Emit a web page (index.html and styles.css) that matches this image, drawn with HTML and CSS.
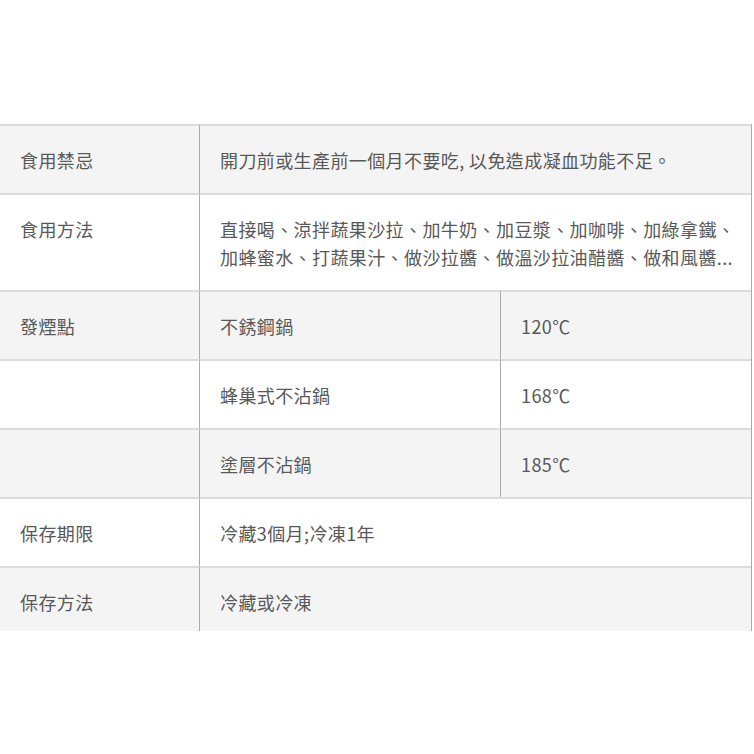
FILE: index.html
```html
<!DOCTYPE html>
<html lang="zh-Hant">
<head>
<meta charset="utf-8">
<title>商品資訊</title>
<link rel="stylesheet" href="styles.css">
</head>
<body>
<div class="spec-wrap">
  <table class="spec">
    <colgroup>
      <col class="c-label">
      <col class="c-mid">
      <col class="c-right">
    </colgroup>
    <tbody>
      <tr class="alt">
        <td class="label">食用禁忌</td>
        <td class="val" colspan="2">開刀前或生產前一個月不要吃, 以免造成凝血功能不足。</td>
      </tr>
      <tr>
        <td class="label">食用方法</td>
        <td class="val" colspan="2">直接喝、涼拌蔬果沙拉、加牛奶、加豆漿、加咖啡、加綠拿鐵、<br>加蜂蜜水、打蔬果汁、做沙拉醬、做溫沙拉油醋醬、做和風醬...</td>
      </tr>
      <tr class="alt">
        <td class="label">發煙點</td>
        <td class="val">不銹鋼鍋</td>
        <td class="val">120℃</td>
      </tr>
      <tr>
        <td class="label"></td>
        <td class="val">蜂巢式不沾鍋</td>
        <td class="val">168℃</td>
      </tr>
      <tr class="alt">
        <td class="label"></td>
        <td class="val">塗層不沾鍋</td>
        <td class="val">185℃</td>
      </tr>
      <tr>
        <td class="label">保存期限</td>
        <td class="val" colspan="2">冷藏3個月;冷凍1年</td>
      </tr>
      <tr class="alt">
        <td class="label">保存方法</td>
        <td class="val" colspan="2">冷藏或冷凍</td>
      </tr>
    </tbody>
  </table>
</div>
</body>
</html>
```
FILE: styles.css
```css
html, body {
  margin: 0;
  padding: 0;
  background: #ffffff;
}

body {
  font-family: "Noto Sans CJK TC", "Noto Sans", sans-serif;
  color: #585858;
}

.spec-wrap {
  margin-top: 124px;
  width: 752px;
  height: 507px;
  overflow: hidden;
}

.spec {
  width: 752px;
  border-collapse: separate;
  border-spacing: 0;
  table-layout: fixed;
  border-right: 1px solid #ababab;
}

.c-label { width: 199px; }
.c-mid { width: 301px; }
.c-right { width: 251px; }

.spec td {
  border-top: 2px solid #dcdcdc;
  padding: 19.5px 20px;
  font-size: 18px;
  letter-spacing: 0.4px;
  line-height: 28px;
  vertical-align: top;
  text-align: left;
  white-space: nowrap;
}

.spec td.val {
  border-left: 1px solid #ababab;
}

.spec tr.alt td {
  background: #f4f4f4;
}
```
